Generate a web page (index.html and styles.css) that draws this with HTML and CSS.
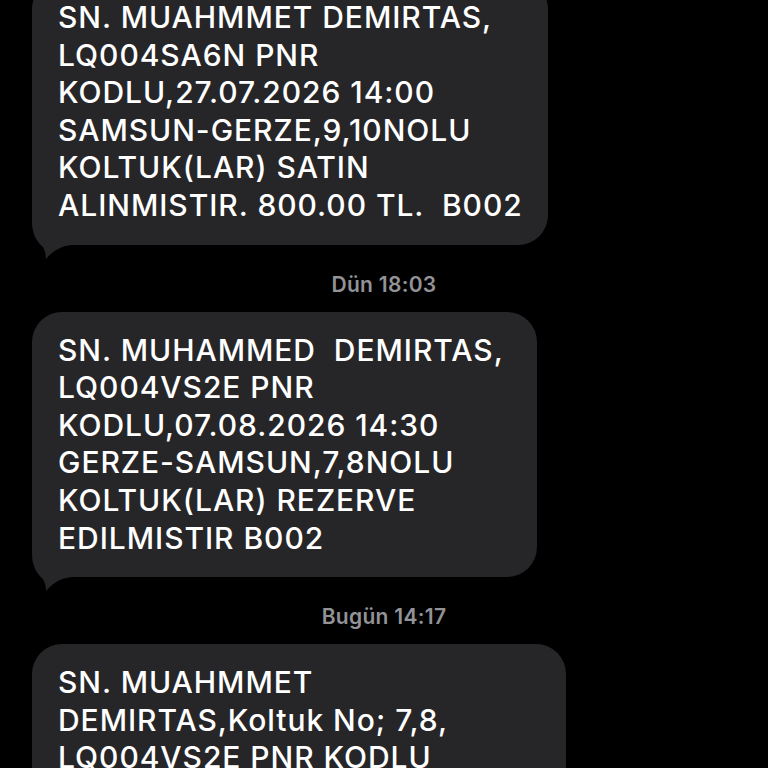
FILE: index.html
```html
<!DOCTYPE html>
<html lang="tr">
<head>
<meta charset="utf-8">
<title>Mesajlar</title>
<link rel="stylesheet" href="styles.css">
</head>
<body>
<main class="thread">
  <div class="bubble bubble--w1">
    <svg class="tail" viewBox="0 0 44 52" aria-hidden="true"><path d="M0 0 V14 C0 26 5 34 11 39 C13 43 14 47 14 51 C19 45 27 38 40 37 H44 V0 Z"/></svg>
    <p class="msg">SN. MUAHMMET DEMIRTAS,
LQ004SA6N PNR
KODLU,27.07.2026 14:00
SAMSUN-GERZE,9,10NOLU
KOLTUK(LAR) SATIN
ALINMISTIR. 800.00 TL.  B002</p>
  </div>
  <div class="stamp">Dün 18:03</div>
  <div class="bubble bubble--w2">
    <svg class="tail" viewBox="0 0 44 52" aria-hidden="true"><path d="M0 0 V14 C0 26 5 34 11 39 C13 43 14 47 14 51 C19 45 27 38 40 37 H44 V0 Z"/></svg>
    <p class="msg">SN. MUHAMMED  DEMIRTAS,
LQ004VS2E PNR
KODLU,07.08.2026 14:30
GERZE-SAMSUN,7,8NOLU
KOLTUK(LAR) REZERVE
EDILMISTIR B002</p>
  </div>
  <div class="stamp">Bugün 14:17</div>
  <div class="bubble bubble--w3">
    <p class="msg">SN. MUAHMMET
DEMIRTAS,Koltuk No; 7,8,
LQ004VS2E PNR KODLU</p>
  </div>
</main>
</body>
</html>
```
FILE: styles.css
```css
html, body {
  margin: 0;
  padding: 0;
  background: #000;
  height: 100%;
  overflow: hidden;
}

.thread {
  display: flex;
  flex-direction: column;
  align-items: flex-start;
  padding-left: 32px;
  margin-top: -21px;
}

.bubble {
  position: relative;
  box-sizing: border-box;
  background: #262629;
  border-radius: 30px;
  padding: 20px 20px 20px 26px;
}

.bubble--w1 { width: 516px; }
.bubble--w2 { width: 505px; }
.bubble--w3 { width: 534px; }

.msg {
  position: relative;
  margin: 0;
  white-space: pre;
  color: #fff;
  font-family: Inter, "Liberation Sans", sans-serif;
  font-size: 30px;
  line-height: 37.6px;
  font-weight: 500;
  letter-spacing: 0.95px;
}

.tail {
  position: absolute;
  left: 0;
  bottom: -15px;
  width: 44px;
  height: 52px;
  fill: #262629;
}

.stamp {
  align-self: stretch;
  margin: 28px 32px 15px 0;
  text-align: center;
  color: #929297;
  font-family: Inter, "Liberation Sans", sans-serif;
  font-size: 21px;
  line-height: 24px;
  font-weight: 600;
  letter-spacing: 0.3px;
}
```
